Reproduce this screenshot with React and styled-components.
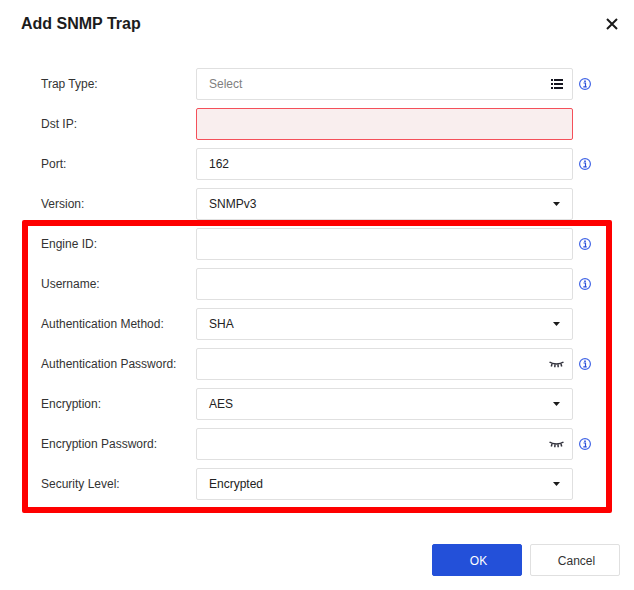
import React from 'react';
import styled, { createGlobalStyle } from 'styled-components';

const GlobalStyle = createGlobalStyle`
  html, body {
    margin: 0;
    padding: 0;
    background: #fff;
  }
  body {
    font-family: "Liberation Sans", Arial, sans-serif;
    font-size: 12px;
    color: #333;
  }
`;

const Dialog = styled.div`
  width: 634px;
  height: 590px;
  box-sizing: border-box;
  padding: 14px 14px 0 21px;
  display: flex;
  flex-direction: column;
`;

const Header = styled.div`
  display: flex;
  justify-content: space-between;
  align-items: center;
  height: 20px;
`;

const Title = styled.h1`
  margin: 0;
  font-size: 16px;
  line-height: 20px;
  font-weight: 700;
  color: #1c1c1c;
`;

const CloseButton = styled.button`
  display: flex;
  padding: 0;
  margin-right: 2px;
  border: none;
  background: none;
`;

const Form = styled.div`
  display: flex;
  flex-direction: column;
  gap: 8px;
  margin-top: 34px;
  padding-left: 20px;
`;

const Group = styled.div`
  position: relative;
  display: flex;
  flex-direction: column;
  gap: 8px;
`;

const Highlight = styled.div`
  position: absolute;
  left: -19px;
  top: -8px;
  width: 590px;
  height: 293px;
  box-sizing: border-box;
  border: 6px solid #fe0000;
  border-radius: 2px;
  pointer-events: none;
`;

const Row = styled.div`
  display: flex;
  align-items: center;
  height: 32px;
`;

const Label = styled.label`
  width: 155px;
  flex: none;
  color: #333;
`;

const Field = styled.div`
  width: 377px;
  height: 32px;
  flex: none;
  box-sizing: border-box;
  display: flex;
  align-items: center;
  justify-content: space-between;
  padding: 0 9px 0 12px;
  border: 1px solid ${props => (props.$error ? '#f4505a' : '#e0e0e0')};
  border-radius: 2px;
  background: ${props => (props.$error ? '#f9eeee' : '#fff')};
  color: #222;
`;

const Placeholder = styled.span`
  color: #808080;
`;

const InfoButton = styled.span`
  display: flex;
  margin-left: 6px;
`;

const IconSlot = styled.span`
  display: flex;
  margin-right: ${props => props.$offset || 0}px;
`;

const Footer = styled.div`
  display: flex;
  justify-content: flex-end;
  gap: 8px;
  margin-top: 44px;
`;

const Button = styled.button`
  width: 90px;
  height: 32px;
  box-sizing: border-box;
  padding: 2px 0 0 3px;
  border-radius: 2px;
  font-family: inherit;
  font-size: 12px;
  border: 1px solid ${props => (props.$primary ? '#2350d9' : '#e0e0e0')};
  background: ${props => (props.$primary ? '#2350d9' : '#fff')};
  color: ${props => (props.$primary ? '#fff' : '#333')};
`;

const CloseIcon = () => (
  <svg width="12" height="12" viewBox="0 0 12 12">
    <path d="M1 1l10 10M11 1L1 11" stroke="#1a1a1a" strokeWidth="2" fill="none" />
  </svg>
);

const InfoIcon = () => (
  <svg width="12" height="12" viewBox="0 0 12 12">
    <circle cx="6" cy="6" r="5.4" stroke="#3f63e6" strokeWidth="1.2" fill="none" />
    <rect x="5.2" y="2.5" width="1.6" height="1.5" fill="#2a4fdb" />
    <path d="M4.5 5h2v3.6M4.3 8.9h3.4" stroke="#2a4fdb" strokeWidth="1.2" fill="none" />
  </svg>
);

const ListIcon = () => (
  <svg width="12" height="10" viewBox="0 0 12 10">
    <path d="M0 0h2v2H0zM3 0h9v2H3zM0 4h2v2H0zM3 4h9v2H3zM0 8h2v2H0zM3 8h9v2H3z" fill="#15151f" />
  </svg>
);

const CaretIcon = () => (
  <svg width="7" height="4" viewBox="0 0 7 4">
    <path d="M0 0h7L3.5 4z" fill="#1a1a1a" />
  </svg>
);

const EyeIcon = () => (
  <svg width="15" height="7" viewBox="0 0 15 7">
    <path
      d="M.5 1c3.5 2.6 10.5 2.6 14 0M3 3L2.3 5.5M6 3.6L5.8 6.2M9 3.6l.2 2.6M12 3l.7 2.5"
      stroke="#33333d"
      strokeWidth="1.5"
      fill="none"
    />
  </svg>
);

const topRows = [
  { label: 'Trap Type:', placeholder: 'Select', icon: 'list', info: true },
  { label: 'Dst IP:', error: true },
  { label: 'Port:', value: '162', info: true },
  { label: 'Version:', value: 'SNMPv3', icon: 'caret' },
];

const securityRows = [
  { label: 'Engine ID:', info: true },
  { label: 'Username:', info: true },
  { label: 'Authentication Method:', value: 'SHA', icon: 'caret' },
  { label: 'Authentication Password:', icon: 'eye', info: true },
  { label: 'Encryption:', value: 'AES', icon: 'caret' },
  { label: 'Encryption Password:', icon: 'eye', info: true },
  { label: 'Security Level:', value: 'Encrypted', icon: 'caret' },
];

function FormRow({ row }) {
  return (
    <Row>
      <Label>{row.label}</Label>
      <Field $error={row.error}>
        {row.placeholder ? <Placeholder>{row.placeholder}</Placeholder> : <span>{row.value}</span>}
        {row.icon === 'list' && <IconSlot><ListIcon /></IconSlot>}
        {row.icon === 'caret' && <IconSlot $offset={3}><CaretIcon /></IconSlot>}
        {row.icon === 'eye' && <IconSlot $offset={-1}><EyeIcon /></IconSlot>}
      </Field>
      {row.info && <InfoButton><InfoIcon /></InfoButton>}
    </Row>
  );
}

export default function App() {
  return (
    <>
      <GlobalStyle />
      <Dialog>
        <Header>
          <Title>Add SNMP Trap</Title>
          <CloseButton><CloseIcon /></CloseButton>
        </Header>
        <Form>
          {topRows.map(row => <FormRow key={row.label} row={row} />)}
          <Group>
            {securityRows.map(row => <FormRow key={row.label} row={row} />)}
            <Highlight />
          </Group>
        </Form>
        <Footer>
          <Button $primary>OK</Button>
          <Button>Cancel</Button>
        </Footer>
      </Dialog>
    </>
  );
}
